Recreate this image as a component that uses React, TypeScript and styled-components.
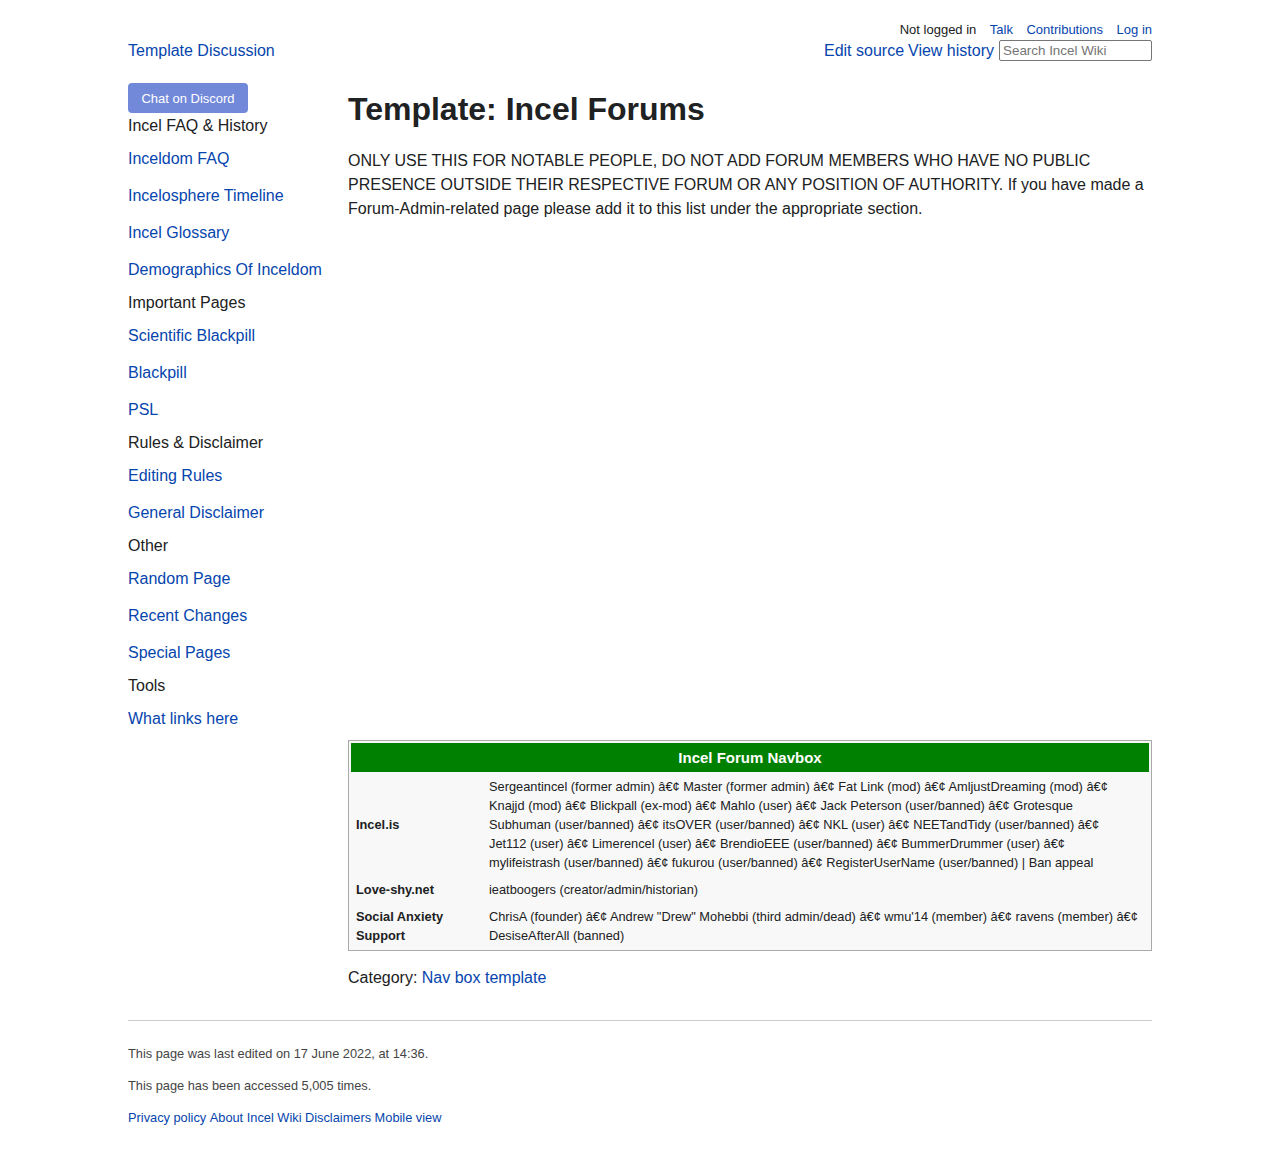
import React from "react";
import styled, { createGlobalStyle } from "styled-components";

const GlobalStyle = createGlobalStyle`
  html, body {
    margin: 0;
    padding: 0;
    background: #ffffff;
  }
  body {
    font-family: "Liberation Sans", Arial, sans-serif;
    color: #202122;
  }
  * { box-sizing: border-box; }
`;

const Page = styled.div`
  width: 1024px;
  margin: 0 auto;
  padding-top: 22px;
  padding-bottom: 30px;
`;

const Link = styled.a`
  color: #0645ad;
  text-decoration: none;
  cursor: pointer;
`;

const Header = styled.header`
  display: flex;
  flex-direction: column;
  gap: 2px;
`;

const PersonalBar = styled.div`
  display: flex;
  justify-content: flex-end;
  gap: 13.5px;
  font-size: 13px;
  line-height: 16px;
`;

const PlainText = styled.span`
  color: #202122;
`;

const NavRow = styled.div`
  display: flex;
  align-items: center;
  justify-content: space-between;
  font-size: 16px;
  line-height: 21px;
`;

const Actions = styled.div`
  display: flex;
  align-items: center;
  gap: 5px;
`;

const ActionLinks = styled.div`
  display: flex;
  gap: 4px;
`;

const SearchInput = styled.input`
  width: 153px;
  height: 21px;
  border: 1px solid #767676;
  border-radius: 2px;
  padding: 0 3px;
  font-family: "Liberation Sans", Arial, sans-serif;
  font-size: 13.4px;
  color: #202122;
  &::placeholder {
    color: #757575;
  }
`;

const Body = styled.div`
  display: grid;
  grid-template-columns: 220px 804px;
  margin-top: 22px;
`;

const Sidebar = styled.nav`
  display: flex;
  flex-direction: column;
  gap: 14px;
  font-size: 16px;
  line-height: 19px;
`;

const DiscordButton = styled.a`
  display: flex;
  align-items: center;
  justify-content: center;
  width: 120px;
  height: 30px;
  margin-bottom: -11px;
  background: #7289da;
  border-radius: 4px;
  color: #ffffff;
  font-size: 13px;
  text-decoration: none;
`;

const Group = styled.div`
  display: flex;
  flex-direction: column;
  gap: 14px;
`;

const GroupTitle = styled.div`
  color: #202122;
`;

const GroupList = styled.div`
  display: flex;
  flex-direction: column;
  gap: 18px;
`;

const Main = styled.main`
  display: flex;
  flex-direction: column;
  padding-top: 7px;
`;

const Title = styled.h1`
  margin: 0;
  font-size: 32px;
  line-height: 38px;
  font-weight: bold;
  color: #202122;
`;

const Intro = styled.p`
  margin: 21px 0 0;
  font-size: 16px;
  line-height: 24px;
`;

const AdSlot = styled.div`
  height: 519px;
`;

const Navbox = styled.div`
  border: 1px solid #aaaaaa;
  background: #f8f8f8;
  padding: 2px;
  display: flex;
  flex-direction: column;
  gap: 2px;
  font-size: 12.8px;
  line-height: 19px;
`;

const NavboxTitle = styled.div`
  background: #008000;
  color: #ffffff;
  font-weight: bold;
  font-size: 15px;
  line-height: 29px;
  text-align: center;
`;

const NavboxRow = styled.div`
  display: grid;
  grid-template-columns: 133px 1fr;
`;

const GroupCell = styled.div`
  display: flex;
  align-items: center;
  padding: 3px 5px;
  font-weight: bold;
  color: #202122;
`;

const ListCell = styled.div`
  padding: 3px 11px 3px 5px;
  color: #202122;
`;

const Category = styled.div`
  margin-top: 17px;
  font-size: 16px;
  line-height: 20px;
`;

const Footer = styled.footer`
  margin-top: 32px;
  border-top: 1px solid #c8ccd1;
  padding-top: 25px;
  display: flex;
  flex-direction: column;
  gap: 17px;
  font-size: 12.8px;
  line-height: 15px;
  color: #444444;
`;

const FooterLinks = styled.div`
  display: flex;
  gap: 3.5px;
`;

const sections: { title: string; links: string[] }[] = [
  {
    title: "Incel FAQ & History",
    links: ["Inceldom FAQ", "Incelosphere Timeline", "Incel Glossary", "Demographics Of Inceldom"],
  },
  { title: "Important Pages", links: ["Scientific Blackpill", "Blackpill", "PSL"] },
  { title: "Rules & Disclaimer", links: ["Editing Rules", "General Disclaimer"] },
  { title: "Other", links: ["Random Page", "Recent Changes", "Special Pages"] },
  { title: "Tools", links: ["What links here"] },
];

const navRows: { group: string; list: string }[] = [
  {
    group: "Incel.is",
    list:
      "Sergeantincel (former admin) â€¢ Master (former admin) â€¢ Fat Link (mod) â€¢ AmljustDreaming (mod) â€¢ Knajjd (mod) â€¢ Blickpall (ex-mod) â€¢ Mahlo (user) â€¢ Jack Peterson (user/banned) â€¢ Grotesque Subhuman (user/banned) â€¢ itsOVER (user/banned) â€¢ NKL (user) â€¢ NEETandTidy (user/banned) â€¢ Jet112 (user) â€¢ Limerencel (user) â€¢ BrendioEEE (user/banned) â€¢ BummerDrummer (user) â€¢ mylifeistrash (user/banned) â€¢ fukurou (user/banned) â€¢ RegisterUserName (user/banned) | Ban appeal",
  },
  { group: "Love-shy.net", list: "ieatboogers (creator/admin/historian)" },
  {
    group: "Social Anxiety Support",
    list:
      "ChrisA (founder) â€¢ Andrew \"Drew\" Mohebbi (third admin/dead) â€¢ wmu'14 (member) â€¢ ravens (member) â€¢ DesiseAfterAll (banned)",
  },
];

export default function App() {
  return (
    <>
      <GlobalStyle />
      <Page>
        <Header>
          <PersonalBar>
            <PlainText>Not logged in</PlainText>
            <Link>Talk</Link>
            <Link>Contributions</Link>
            <Link>Log in</Link>
          </PersonalBar>
          <NavRow>
            <Link>Template Discussion</Link>
            <Actions>
              <ActionLinks>
                <Link>Edit source</Link>
                <Link>View history</Link>
              </ActionLinks>
              <SearchInput placeholder="Search Incel Wiki" />
            </Actions>
          </NavRow>
        </Header>
        <Body>
          <Sidebar>
            <DiscordButton>Chat on Discord</DiscordButton>
            {sections.map((s) => (
              <Group key={s.title}>
                <GroupTitle>{s.title}</GroupTitle>
                <GroupList>
                  {s.links.map((l) => (
                    <Link key={l}>{l}</Link>
                  ))}
                </GroupList>
              </Group>
            ))}
          </Sidebar>
          <Main>
            <Title>Template: Incel Forums</Title>
            <Intro>
              ONLY USE THIS FOR NOTABLE PEOPLE, DO NOT ADD FORUM MEMBERS WHO HAVE NO PUBLIC PRESENCE
              OUTSIDE THEIR RESPECTIVE FORUM OR ANY POSITION OF AUTHORITY. If you have made a
              Forum-Admin-related page please add it to this list under the appropriate section.
            </Intro>
            <AdSlot />
            <Navbox>
              <NavboxTitle>Incel Forum Navbox</NavboxTitle>
              {navRows.map((r) => (
                <NavboxRow key={r.group}>
                  <GroupCell>{r.group}</GroupCell>
                  <ListCell>{r.list}</ListCell>
                </NavboxRow>
              ))}
            </Navbox>
            <Category>
              Category: <Link>Nav box template</Link>
            </Category>
          </Main>
        </Body>
        <Footer>
          <div>This page was last edited on 17 June 2022, at 14:36.</div>
          <div>This page has been accessed 5,005 times.</div>
          <FooterLinks>
            <Link>Privacy policy</Link>
            <Link>About Incel Wiki</Link>
            <Link>Disclaimers</Link>
            <Link>Mobile view</Link>
          </FooterLinks>
        </Footer>
      </Page>
    </>
  );
}
